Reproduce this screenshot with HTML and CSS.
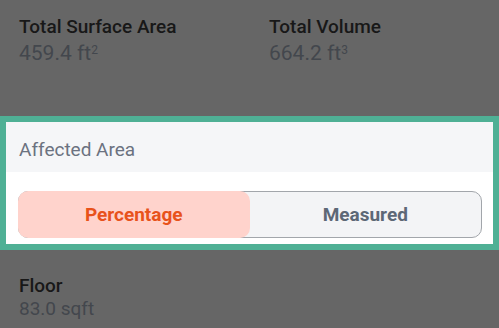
FILE: index.html
```html
<!DOCTYPE html>
<html lang="en">
<head>
    <meta charset="UTF-8">
    <meta name="viewport" content="width=device-width, initial-scale=1.0">
    <title>Affected Area</title>
    <link rel="stylesheet" href="styles.css">
</head>
<body>

    <div class="stats-row">
        <div class="stat">
            <div class="stat-label">Total Surface Area</div>
            <div class="stat-value">459.4 ft<sup>2</sup></div>
        </div>
        <div class="stat">
            <div class="stat-label">Total Volume</div>
            <div class="stat-value">664.2 ft<sup>3</sup></div>
        </div>
    </div>

    <div class="highlight-box">
        <div class="box-header">Affected Area</div>
        <div class="box-body">
            <div class="segmented">
                <button class="segment active">Percentage</button>
                <button class="segment">Measured</button>
            </div>
        </div>
    </div>

    <div class="floor-row">
        <div class="stat">
            <div class="stat-label">Floor</div>
            <div class="stat-value small">83.0 sqft</div>
        </div>
    </div>

</body>
</html>
```

FILE: styles.css
```css
body {
    font-family: Roboto, "Liberation Sans", Arial, sans-serif;
    margin: 0;
    background-color: #666666;
    width: 499px;
    height: 328px;
    overflow: hidden;
}
.stats-row {
    display: grid;
    grid-template-columns: 250px 1fr;
    padding: 16px 0 0 19px;
    height: 100px;
}
.stat-label {
    font-size: 19px;
    font-weight: 500;
    color: #181818;
    line-height: 22px;
}
.stat-value {
    font-size: 21px;
    color: #43474d;
    line-height: 26px;
    margin-top: 2px;
}
.stat-value sup {
    font-size: 12px;
    vertical-align: top;
    position: relative;
    top: -3px;
}
.stat-value.small {
    font-size: 19px;
    line-height: 24px;
    margin-top: 0;
}
.highlight-box {
    border: 6px solid #4fb095;
    background: #ffffff;
}
.box-header {
    background: #f5f6f8;
    height: 50px;
    display: flex;
    align-items: center;
    padding: 4px 0 0 13px;
    box-sizing: border-box;
    font-size: 19px;
    color: #6b7280;
}
.box-body {
    padding: 19px 11px 6px 12px;
}
.segmented {
    display: flex;
    height: 45px;
    border: 1px solid #a2a6ab;
    border-radius: 10px;
    background: #f3f4f6;
}
.segment {
    flex: 1;
    border: none;
    background: transparent;
    font-family: inherit;
    font-size: 19px;
    font-weight: 700;
    color: #5d6876;
    border-radius: 10px;
    padding: 0;
}
.segment.active {
    margin: -1px 0 -1px -1px;
    background: #ffd3cc;
    color: #e8521b;
}
.floor-row {
    padding: 25px 0 0 19px;
}
```
